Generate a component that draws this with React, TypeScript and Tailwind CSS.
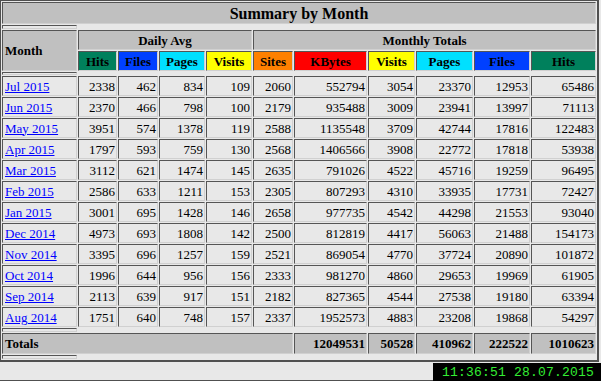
const cell =
  "border border-t-[#555555] border-l-[#555555] border-r-[#d0d0d0] border-b-[#d0d0d0] p-0 px-[1px] leading-[15px]";

const heads = [
  { label: "Hits", cls: "w-[39px] bg-[#00805c]" },
  { label: "Files", cls: "w-[40px] bg-[#0040ff]" },
  { label: "Pages", cls: "w-[46px] bg-[#00e0ff]" },
  { label: "Visits", cls: "w-[46px] bg-[#ffff00]" },
  { label: "Sites", cls: "w-[40px] bg-[#ff8000]" },
  { label: "KBytes", cls: "w-[73px] bg-[#ff0000]" },
  { label: "Visits", cls: "w-[47px] bg-[#ffff00]" },
  { label: "Pages", cls: "w-[57px] bg-[#00e0ff]" },
  { label: "Files", cls: "w-[56px] bg-[#0040ff]" },
  { label: "Hits", cls: "w-[65px] bg-[#00805c]" },
];

const rows: [string, ...number[]][] = [
  ["Jul 2015", 2338, 462, 834, 109, 2060, 552794, 3054, 23370, 12953, 65486],
  ["Jun 2015", 2370, 466, 798, 100, 2179, 935488, 3009, 23941, 13997, 71113],
  ["May 2015", 3951, 574, 1378, 119, 2588, 1135548, 3709, 42744, 17816, 122483],
  ["Apr 2015", 1797, 593, 759, 130, 2568, 1406566, 3908, 22772, 17818, 53938],
  ["Mar 2015", 3112, 621, 1474, 145, 2635, 791026, 4522, 45716, 19259, 96495],
  ["Feb 2015", 2586, 633, 1211, 153, 2305, 807293, 4310, 33935, 17731, 72427],
  ["Jan 2015", 3001, 695, 1428, 146, 2658, 977735, 4542, 44298, 21553, 93040],
  ["Dec 2014", 4973, 693, 1808, 142, 2500, 812819, 4417, 56063, 21488, 154173],
  ["Nov 2014", 3395, 696, 1257, 159, 2521, 869054, 4770, 37724, 20890, 101872],
  ["Oct 2014", 1996, 644, 956, 156, 2333, 981270, 4860, 29653, 19969, 61905],
  ["Sep 2014", 2113, 639, 917, 151, 2182, 827365, 4544, 27538, 19180, 63394],
  ["Aug 2014", 1751, 640, 748, 157, 2337, 1952573, 4883, 23208, 19868, 54297],
];

const totals = [12049531, 50528, 410962, 222522, 1010623];

function Spacer({ h }: { h: string }) {
  return (
    <tr>
      <th className={`${cell} ${h} w-[75px]`}></th>
    </tr>
  );
}

export default function App() {
  return (
    <div className="w-[601px] h-[381px] bg-[#e8e8e8] font-['Liberation_Serif',serif] text-[13px] text-black overflow-hidden">
      <table className="w-[599px] border-separate border-spacing-[1px] border-l border-t border-r-2 border-b-2 border-[#505050]">
        <tbody>
          <tr>
            <th colSpan={11} className={`${cell} h-[22px] bg-[#c0c0c0] text-center text-[16px] leading-[19px] font-bold`}>
              Summary by Month
            </th>
          </tr>
          <Spacer h="h-[4px]" />
          <tr>
            <th rowSpan={2} className={`${cell} w-[75px] bg-[#c0c0c0] text-left font-bold px-[2px]`}>
              Month
            </th>
            <th colSpan={4} className={`${cell} h-[20px] bg-[#c0c0c0] text-center font-bold`}>
              Daily Avg
            </th>
            <th colSpan={6} className={`${cell} h-[20px] bg-[#c0c0c0] text-center font-bold`}>
              Monthly Totals
            </th>
          </tr>
          <tr>
            {heads.map((hd, i) => (
              <th key={i} className={`${cell} ${hd.cls} h-[20px] text-center font-bold`}>
                {hd.label}
              </th>
            ))}
          </tr>
          <Spacer h="h-[3px]" />
          {rows.map(([month, ...vals]) => (
            <tr key={month}>
              <td className={`${cell} h-[20px] text-left whitespace-nowrap px-[2px]`}>
                <a href="#" className="text-[#0000ff] underline">
                  {month}
                </a>
              </td>
              {vals.map((v, i) => (
                <td key={i} className={`${cell} h-[20px] text-right`}>
                  {v}
                </td>
              ))}
            </tr>
          ))}
          <Spacer h="h-[4px]" />
          <tr>
            <th colSpan={6} className={`${cell} h-[21px] bg-[#c0c0c0] text-left font-bold px-[2px]`}>
              Totals
            </th>
            {totals.map((t, i) => (
              <th key={i} className={`${cell} h-[21px] bg-[#c0c0c0] text-right font-bold`}>
                {t}
              </th>
            ))}
          </tr>
          <Spacer h="h-[4px]" />
        </tbody>
      </table>
      <div className="flex h-[19px] mt-[1px]">
        <div className="flex-1 border-b border-[#505050] mb-[1px]"></div>
        <div className="w-[168px] bg-black text-[#33ee33] font-['Liberation_Mono',monospace] text-[13px] tracking-[0.2px] leading-[19px] pl-[9px]">
          11:36:51 28.07.2015
        </div>
      </div>
    </div>
  );
}
